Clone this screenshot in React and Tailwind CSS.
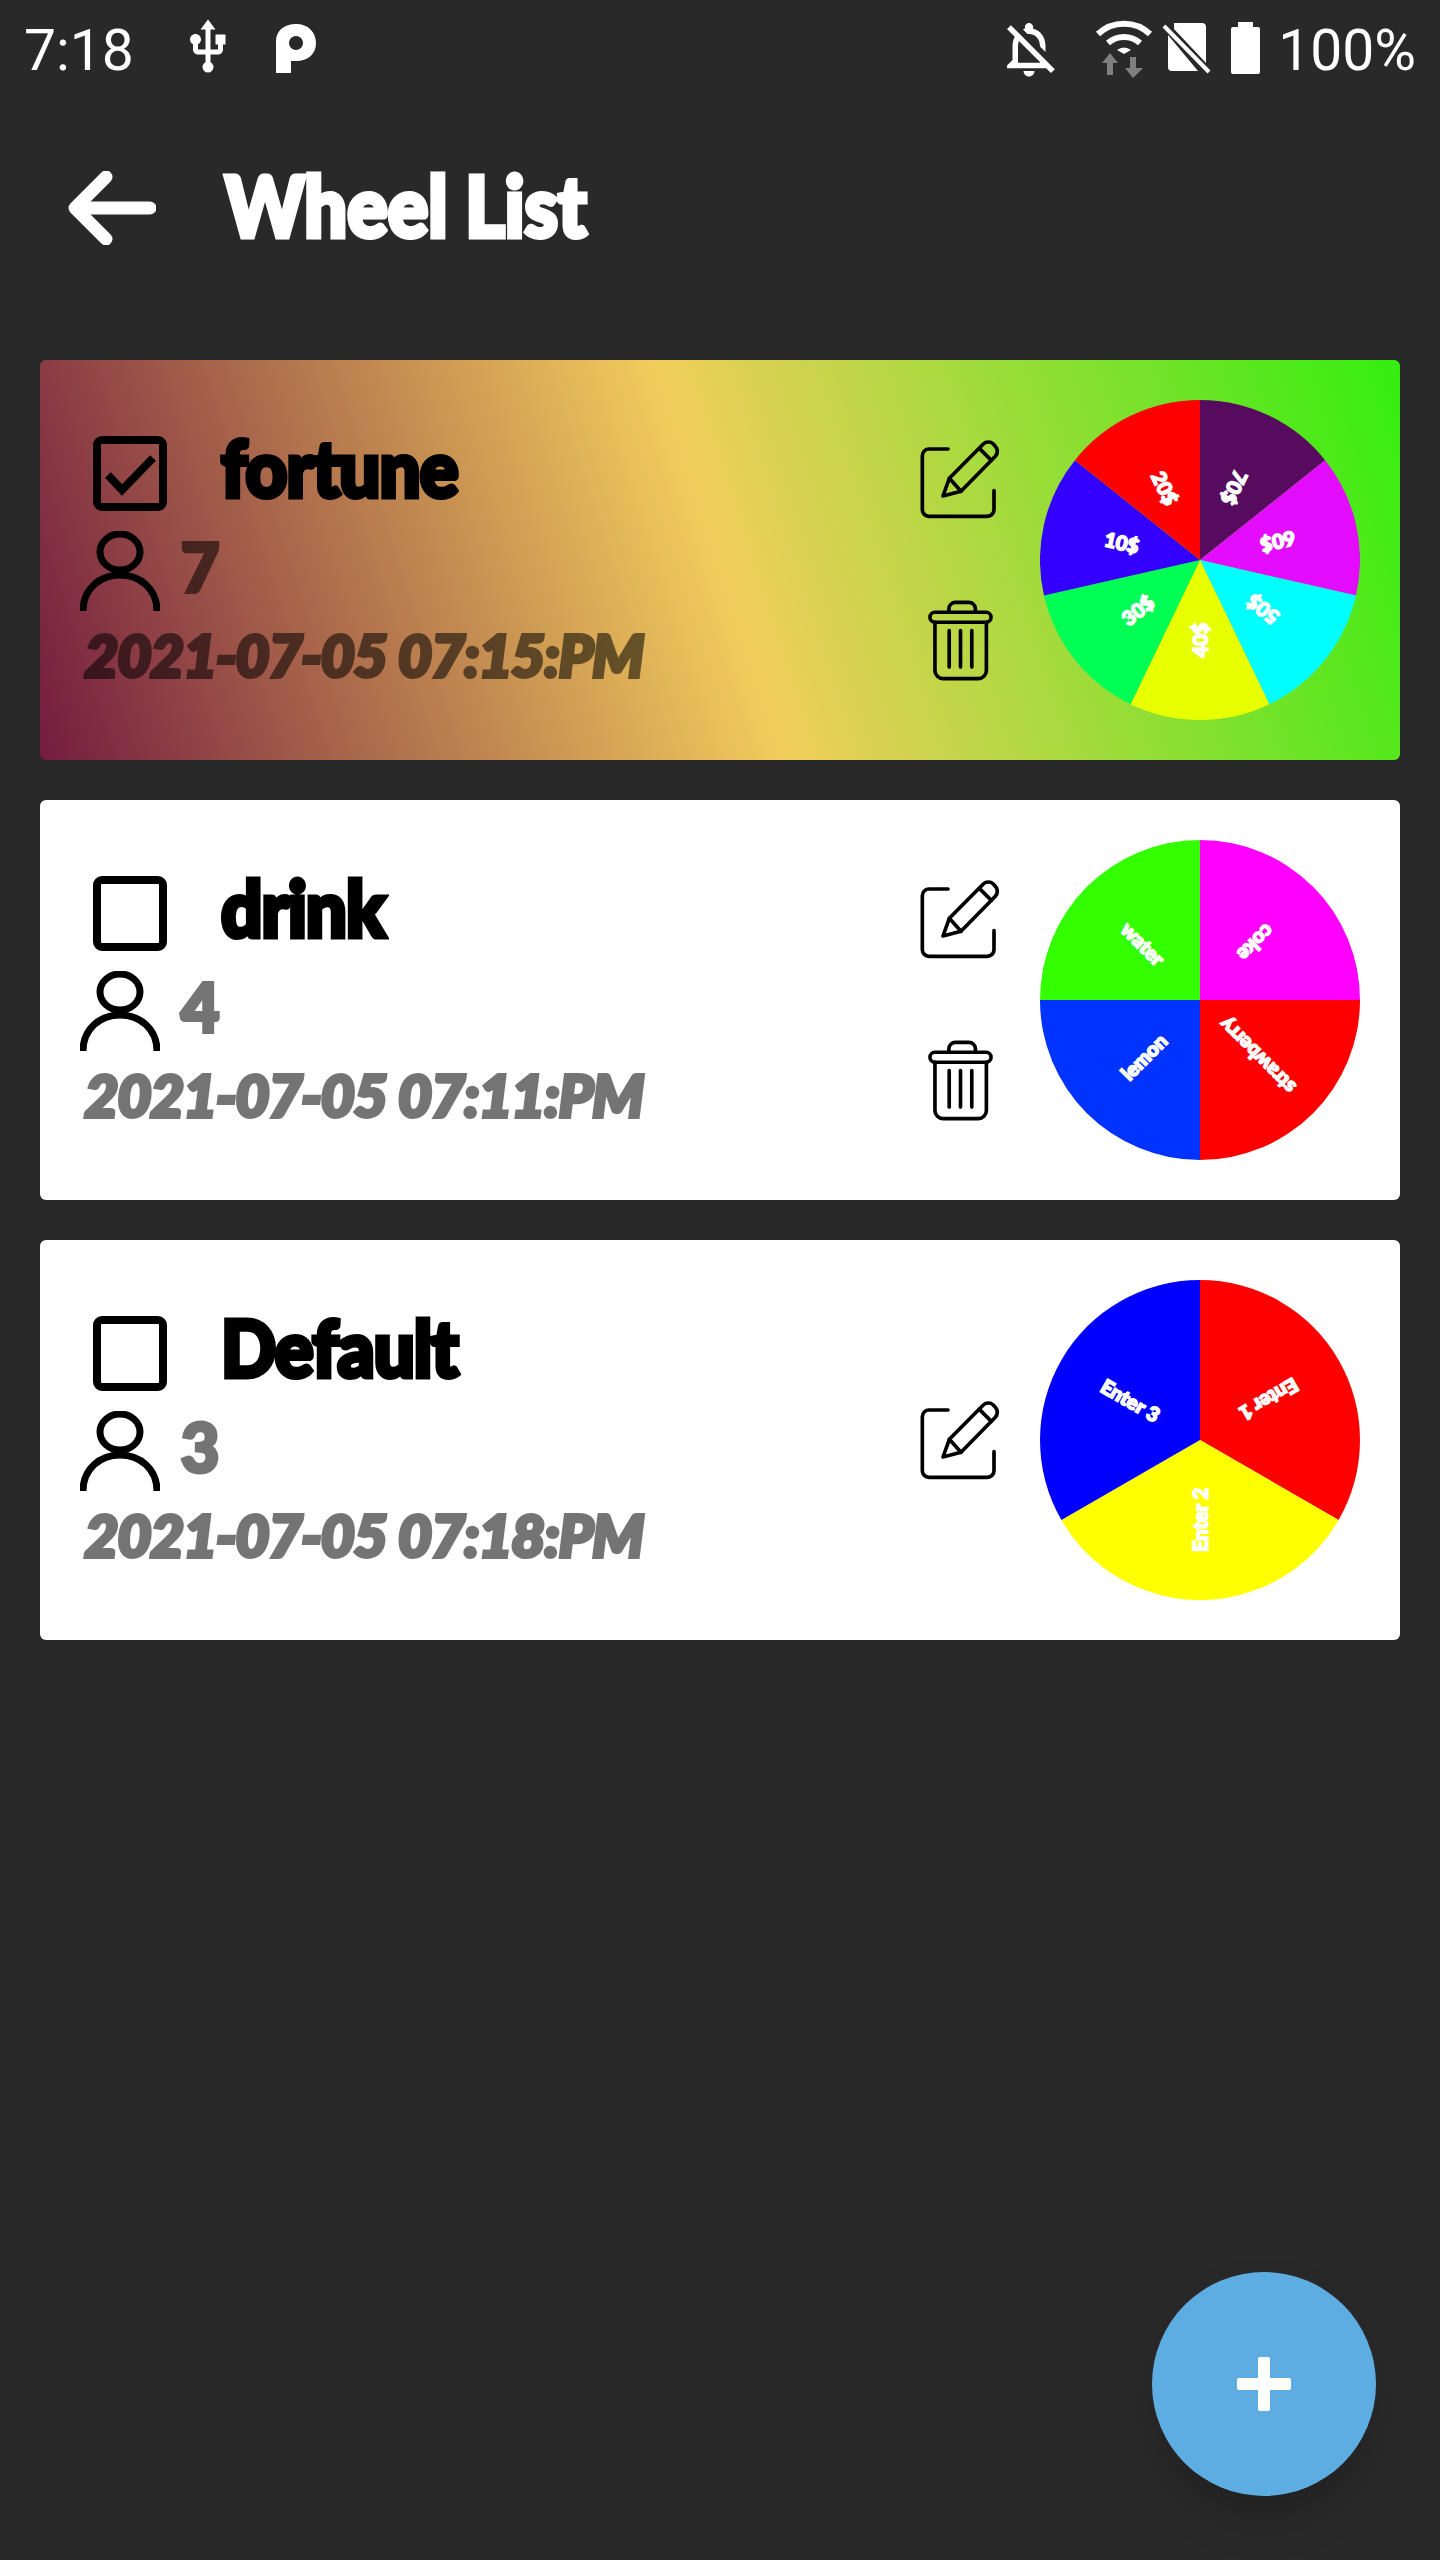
import { MdUsb, MdOutlineNotificationsOff } from 'react-icons/md'

const wheels = {
    fortune: [
        { label: '70$', color: '#560b5e' },
        { label: '60$', color: '#e40cff' },
        { label: '50$', color: '#00ffff' },
        { label: '40$', color: '#e8ff00' },
        { label: '30$', color: '#00ff55' },
        { label: '10$', color: '#3300ff' },
        { label: '20$', color: '#ff0000' },
    ],
    drink: [
        { label: 'coke', color: '#ff00ff' },
        { label: 'strawberry', color: '#ff0000' },
        { label: 'lemon', color: '#0033ff' },
        { label: 'water', color: '#33ff00' },
    ],
    standard: [
        { label: 'Enter 1', color: '#ff0000' },
        { label: 'Enter 2', color: '#ffff00' },
        { label: 'Enter 3', color: '#0000ff' },
    ],
}

const lists = [
    { name: 'fortune', count: 7, date: '2021-07-05 07:15:PM', slices: wheels.fortune, selected: true, canDelete: true },
    { name: 'drink', count: 4, date: '2021-07-05 07:11:PM', slices: wheels.drink, selected: false, canDelete: true },
    { name: 'Default', count: 3, date: '2021-07-05 07:18:PM', slices: wheels.standard, selected: false, canDelete: false },
]

const Wheel = ({ slices }) => {
    const step = 360 / slices.length
    const point = (deg, r) => {
        const rad = (deg * Math.PI) / 180
        return [160 + r * Math.sin(rad), 160 - r * Math.cos(rad)]
    }
    return (
        <svg viewBox="0 0 320 320" className="w-80 h-80 shrink-0">
            {slices.map((s, i) => {
                const [x1, y1] = point(i * step, 160)
                const [x2, y2] = point((i + 1) * step, 160)
                return <path key={s.label} d={`M160 160 L${x1} ${y1} A160 160 0 0 1 ${x2} ${y2} Z`} fill={s.color} />
            })}
            {slices.map((s, i) => {
                const mid = (i + 0.5) * step
                const [x, y] = point(mid, 80)
                return (
                    <text
                        key={s.label}
                        x={x}
                        y={y}
                        transform={`rotate(${mid + 90} ${x} ${y})`}
                        textAnchor="middle"
                        dominantBaseline="central"
                        fill="#fff"
                        stroke="#fff"
                        strokeWidth="1.6"
                        className="font-['Lato',sans-serif] font-black text-[20px]"
                    >
                        {s.label}
                    </text>
                )
            })}
        </svg>
    )
}

const CheckBox = ({ checked }) => (
    <svg viewBox="0 0 74 75" className="w-[74px] h-[75px] shrink-0" fill="none" stroke="#000">
        <rect x="4" y="4" width="66" height="67" rx="5" strokeWidth="8" />
        {checked && <path d="M15 39 L29 54 L60 22" strokeWidth="8" />}
    </svg>
)

const Person = () => (
    <svg viewBox="0 0 80 80" className="w-20 h-20 shrink-0" fill="none" stroke="#000" strokeWidth="7">
        <ellipse cx="40" cy="21" rx="20" ry="18" />
        <path d="M3 80 C3 58 20 44 40 44 C60 44 77 58 77 80" />
    </svg>
)

const EditIcon = () => (
    <svg viewBox="120 180 240 240" className="w-20 h-20" fill="none" stroke="#000" strokeWidth="11" strokeLinecap="round" strokeLinejoin="round">
        <path d="M204 210 H147 a20 20 0 0 0 -20 20 V392 a20 20 0 0 0 20 20 H322 a20 20 0 0 0 20 -20 V335" />
        <path d="M189 351 L208 298 L310 195 a22 22 0 0 1 30 0 L346 202 a22 22 0 0 1 0 30 L243 337 Z" />
        <path d="M208 298 L243 337" />
        <path d="M298 208 L334 244" />
    </svg>
)

const TrashIcon = () => (
    <svg viewBox="140 655 200 250" className="w-[67px] h-[83px]" fill="none" stroke="#000" strokeWidth="11" strokeLinecap="round">
        <rect x="148" y="695" width="184" height="30" rx="15" />
        <path d="M205 695 v-10 a20 20 0 0 1 20 -20 h40 a20 20 0 0 1 20 20 v10" />
        <path d="M163 725 V870 a25 25 0 0 0 25 25 h105 a25 25 0 0 0 25 -25 V725" />
        <path d="M206 750 V860 M240 750 V860 M274 750 V860" />
    </svg>
)

const ListCard = ({ item }) => (
    <div className={`flex h-[400px] rounded-[6px] pr-10 ${item.selected ? 'bg-[linear-gradient(72deg,#741c3f,#f2cd5c,#33ee0f)]' : 'bg-white'}`}>
        <div className="flex-1 pt-[76px]">
            <div className="flex items-center h-[75px] pl-[53px]">
                <CheckBox checked={item.selected} />
                <span className="ml-[54px] font-['Lato',sans-serif] font-black text-[78px] leading-none text-black tracking-[-1px] origin-left scale-x-[.93] [-webkit-text-stroke:5px_#000] mt-[-14px]">
                    {item.name}
                </span>
            </div>
            <div className="flex mt-5 pl-10">
                <Person />
                <span className="ml-[21px] h-12 mt-3 font-['Lato',sans-serif] font-black text-[66px] leading-[48px] text-black opacity-[.54] [-webkit-text-stroke:4px_#000]">
                    {item.count}
                </span>
            </div>
            <div className="pl-[44px] mt-[22px] h-[43px] font-['Lato',sans-serif] font-black italic text-[58px] leading-[43px] text-black opacity-[.54] whitespace-nowrap tracking-[-1px] origin-left scale-x-[1.01] [-webkit-text-stroke:4px_#000]">
                {item.date}
            </div>
        </div>
        <div className="flex flex-col items-center justify-center gap-20 w-20 mr-10 shrink-0">
            <EditIcon />
            {item.canDelete && <TrashIcon />}
        </div>
        <div className="flex items-center">
            <Wheel slices={item.slices} />
        </div>
    </div>
)

const StatusBar = () => (
    <div className="flex h-[100px] text-white font-['Roboto',sans-serif] text-[57px] leading-none">
        <span className="ml-[24px] mt-[22px]">7:18</span>
        <MdUsb className="ml-[44px] mt-[17px] w-[60px] h-[60px]" />
        <svg viewBox="0 0 40 49" className="ml-[38px] mt-[24px] w-10 h-[49px]" fill="#fff">
            <path fillRule="evenodd" d="M0 49 V17 C0 7 8 0 20 0 C32 0 40 8 40 19 C40 30 32 37 20 37 H15 V49 Z M20 12 a7 7 0 1 0 0.01 0 Z" />
        </svg>
        <div className="flex-1" />
        <MdOutlineNotificationsOff className="mt-[16px] w-[66px] h-[66px]" />
        <svg viewBox="0 0 58 60" className="ml-[33px] mt-[18px] w-[58px] h-[60px]" fill="none">
            <path d="M3 16 a38 38 0 0 1 52 0" stroke="#fff" strokeWidth="6" />
            <path d="M13 25 a24 24 0 0 1 32 0" stroke="#fff" strokeWidth="6" />
            <path d="M22 32 a11 11 0 0 1 14 0 L29 36 Z" fill="#fff" />
            <path d="M15 35 L23 45 H18 V57 H12 V45 H7 Z" fill="#7f7f7f" />
            <path d="M35 39 H41 V50 H48 L38 60 L30 50 H35 Z" fill="#7f7f7f" />
        </svg>
        <svg viewBox="0 0 50 54" className="ml-[9px] mt-[21px] w-[50px] h-[54px]" fill="none">
            <path d="M12 2 H40 a4 4 0 0 1 4 4 V42 L12 8 Z M6 14 L36 50 H10 a4 4 0 0 1 -4 -4 Z" fill="#fff" />
            <path d="M2 5 L47 51" stroke="#fff" strokeWidth="4" />
        </svg>
        <svg viewBox="0 0 29 52" className="ml-[19px] mt-[22px] w-[29px] h-[52px]" fill="#fff">
            <path d="M7 0 H22 V5 H27 a2 2 0 0 1 2 2 V50 a2 2 0 0 1 -2 2 H2 a2 2 0 0 1 -2 -2 V7 a2 2 0 0 1 2 -2 H7 Z" />
        </svg>
        <span className="ml-[18px] mr-[24px] mt-[22px]">100%</span>
    </div>
)

const App = () => {
    return (
        <div className="relative w-[1440px] h-[2560px] bg-[#292929] overflow-hidden">
            <StatusBar />
            <div className="flex h-[260px] pl-[68px] pt-[71px]">
                <svg viewBox="0 0 88 74" className="w-[88px] h-[74px]" fill="none" stroke="#fff" strokeWidth="13" strokeLinecap="round" strokeLinejoin="round">
                    <path d="M7 37 H82 M38 6 L7 37 L38 68" />
                </svg>
                <h1 className="ml-[69px] h-[74px] font-['Lato',sans-serif] font-black text-[84px] leading-[68px] text-white whitespace-nowrap origin-left scale-x-[.9] [-webkit-text-stroke:5px_#fff]">
                    Wheel List
                </h1>
            </div>
            <div className="flex flex-col gap-10 px-10">
                {lists.map((item) => (
                    <ListCard key={item.name} item={item} />
                ))}
            </div>
            <button className="absolute right-16 bottom-16 w-56 h-56 rounded-full bg-[#5dade2] shadow-2xl flex items-center justify-center">
                <svg viewBox="0 0 54 54" className="w-[54px] h-[54px]" fill="#fff">
                    <rect x="21" y="0" width="12" height="54" rx="2" />
                    <rect x="0" y="21" width="54" height="12" rx="2" />
                </svg>
            </button>
        </div>
    )
}

export default App
